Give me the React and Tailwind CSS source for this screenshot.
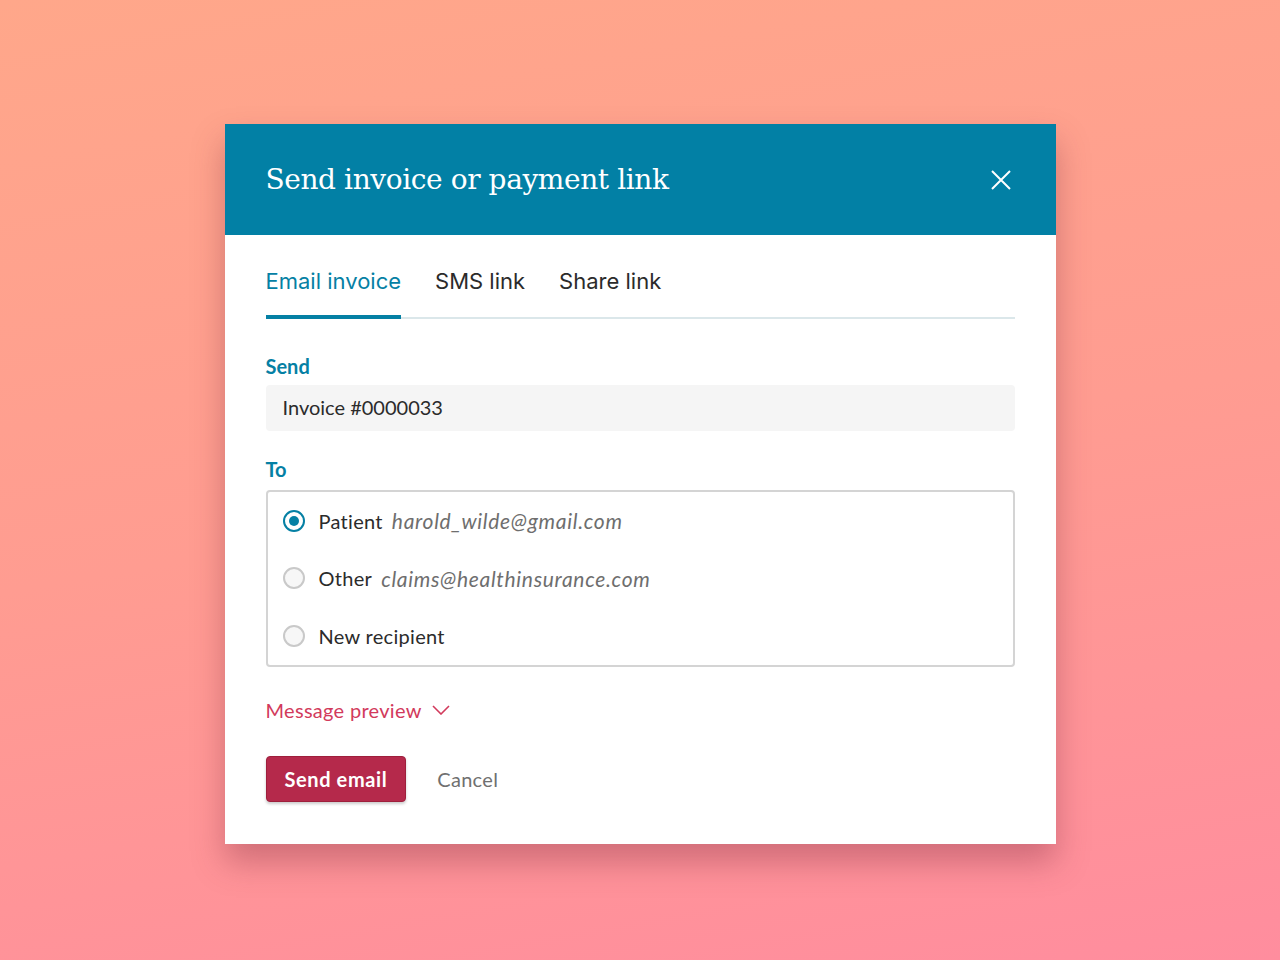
import React, { useState } from "react";

const recipients = [
  { id: "patient", label: "Patient", email: "harold_wilde@gmail.com" },
  { id: "other", label: "Other", email: "claims@healthinsurance.com" },
  { id: "new", label: "New recipient", email: null },
];

const tabs = ["Email invoice", "SMS link", "Share link"];

const Radio = ({ checked }) => (
  <span
    className={
      checked
        ? "flex h-[22px] w-[22px] shrink-0 items-center justify-center rounded-full border-2 border-[#0580a4] bg-white"
        : "flex h-[22px] w-[22px] shrink-0 items-center justify-center rounded-full border-2 border-[#c9c9c9] bg-[#f7f7f7]"
    }
  >
    {checked && <span className="h-[10px] w-[10px] rounded-full bg-[#0580a4]" />}
  </span>
);

const App = () => {
  const [tab, setTab] = useState(0);
  const [to, setTo] = useState("patient");

  return (
    <div
      className="flex min-h-[960px] w-full items-start justify-center bg-[linear-gradient(170deg,#ffa78a_0%,#ff9c91_50%,#ff8d9e_100%)] pt-[124px]"
      style={{ fontFamily: "Lato, 'Liberation Sans', sans-serif" }}
    >
      <div className="w-[831px] bg-white shadow-[0_18px_30px_rgba(120,40,60,0.35)]">
        {/* header */}
        <div className="flex h-[111px] items-center justify-between bg-[#0280a5] pl-[41px] pr-[44px]">
          <h1
            className="text-[28px] leading-none text-white"
            style={{ fontFamily: "'DejaVu Serif', 'Liberation Serif', serif", letterSpacing: "-0.4px" }}
          >
            Send invoice or payment link
          </h1>
          <button className="text-white">
            <svg width="22" height="22" viewBox="0 0 22 22" fill="none" stroke="currentColor" strokeWidth="2">
              <path d="M2 2 L20 20 M20 2 L2 20" />
            </svg>
          </button>
        </div>

        <div className="px-[41px] pb-[42px]">
          {/* tabs */}
          <div className="mt-[32px] flex gap-[34px] border-b-2 border-[#dbe7ea]">
            {tabs.map((t, i) => (
              <button
                key={t}
                onClick={() => setTab(i)}
                className={
                  i === tab
                    ? "-mb-[2px] border-b-4 border-[#0580a4] pb-[20px] text-[22px] leading-[28px] text-[#0580a4]"
                    : "-mb-[2px] border-b-4 border-transparent pb-[20px] text-[22px] leading-[28px] text-[#2b2b2b]"
                }
                style={{ fontFamily: "Inter, sans-serif" }}
              >
                {t}
              </button>
            ))}
          </div>

          {/* send */}
          <div className="mt-[34px] text-[20px] font-bold leading-[26px] text-[#0580a4]">Send</div>
          <div className="mt-[6px] flex h-[46px] items-center rounded-[4px] bg-[#f5f5f5] px-[17px] pb-[3px] text-[20px] text-[#2b2b2b]">
            Invoice #0000033
          </div>

          {/* to */}
          <div className="mt-[25px] text-[20px] font-bold leading-[26px] text-[#0580a4]">To</div>
          <div className="mt-[8px] flex flex-col rounded-[4px] border-2 border-[#d4d4d4] px-[15px]">
            {recipients.map((r) => (
              <label
                key={r.id}
                onClick={() => setTo(r.id)}
                className="flex h-[57.5px] cursor-pointer items-center gap-[14px] text-[20px]"
              >
                <Radio checked={to === r.id} />
                <span className="tracking-[0.3px] text-[#2b2b2b]">{r.label}</span>
                {r.email && (
                  <span className="-ml-[5px] text-[21px] italic tracking-[0.7px] text-[#6e6e6e]">{r.email}</span>
                )}
              </label>
            ))}
          </div>

          {/* preview */}
          <button className="mt-[28px] flex items-center gap-[10px] text-[20px] tracking-[0.3px] text-[#d23a5c]">
            Message preview
            <svg width="18" height="10" viewBox="0 0 18 10" fill="none" stroke="currentColor" strokeWidth="1.6">
              <path d="M1 1 L9 9 L17 1" />
            </svg>
          </button>

          {/* actions */}
          <div className="mt-[31px] flex items-center gap-[31px]">
            <button className="h-[46px] rounded-[4px] border border-[#9e1f3c] bg-[#b5294b] px-[18px] text-[20px] font-bold tracking-[0.6px] text-white shadow-[0_2px_3px_rgba(0,0,0,0.2)]">
              Send email
            </button>
            <button className="text-[20px] tracking-[0.3px] text-[#707070]">Cancel</button>
          </div>
        </div>
      </div>
    </div>
  );
};

export default App;
